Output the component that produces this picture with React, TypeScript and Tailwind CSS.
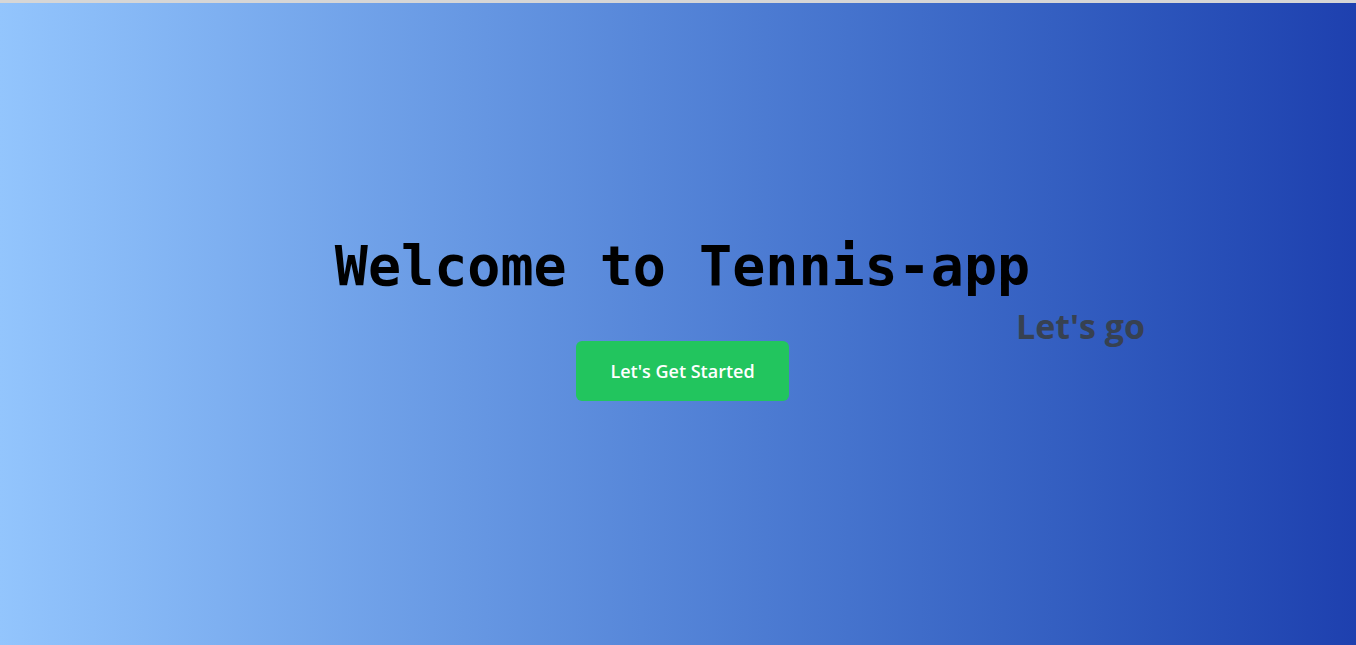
const App = () => {
  return (
    <div className="w-full h-[645px] border-t-[3px] border-[#d6d6d6] bg-gradient-to-r from-[#93c5fd] to-[#1e40af] overflow-hidden">
      <div className="flex flex-col items-center pt-[230px] pl-[9px]">
        <h1 className="text-[55px] leading-[66px] font-bold text-black font-['DejaVu_Sans_Mono',monospace]">
          Welcome to Tennis-app
        </h1>
        <div className="self-stretch mt-[9px] pl-[1007px] h-9 text-[34px] leading-9 font-bold text-[#374151] font-['Open_Sans',sans-serif]">
          Let's go
        </div>
        <button className="-mt-[3px] w-[213px] h-[60px] rounded-md bg-[#22c55e] text-white text-lg font-semibold font-['Open_Sans',sans-serif]">
          Let's Get Started
        </button>
      </div>
    </div>
  );
};

export default App;
